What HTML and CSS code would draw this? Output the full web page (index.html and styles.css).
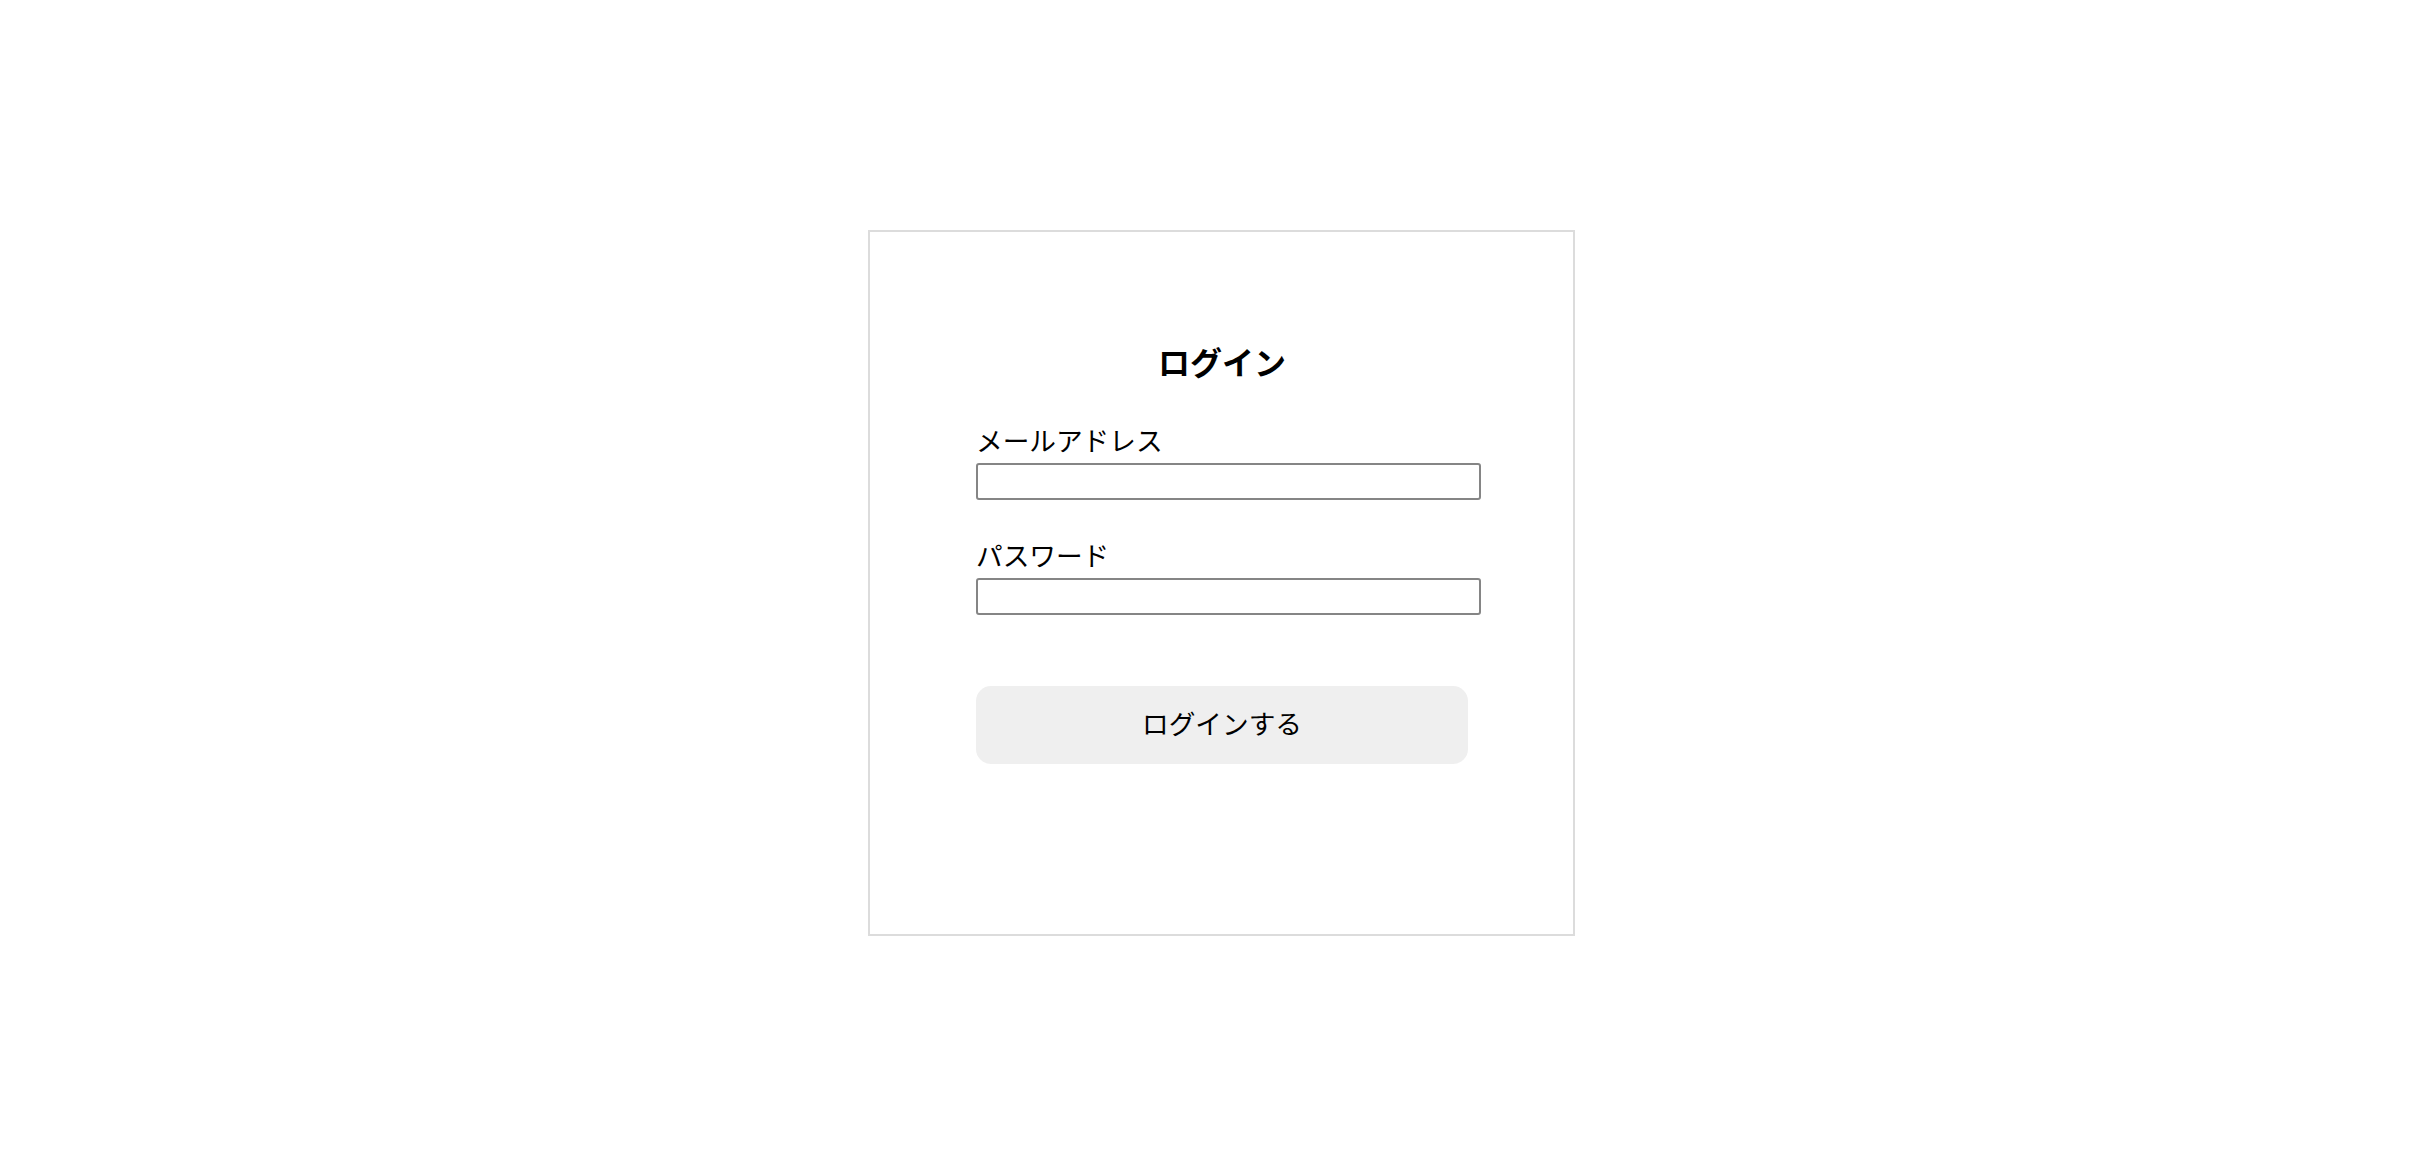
FILE: index.html
```html
<!DOCTYPE html>
<html lang="ja">
<head>
    <meta charset="UTF-8">
    <meta name="viewport" content="width=device-width, initial-scale=1.0">
    <title>ログイン</title>
    <link rel="stylesheet" href="styles.css">
</head>
<body>
    <div class="page">
        <!-- Login Form -->
        <div class="login-box">
            <h1>ログイン</h1>
            <form class="login-form">
                <div class="field">
                    <label for="email">メールアドレス</label>
                    <input type="email" id="email" name="email">
                </div>
                <div class="field">
                    <label for="password">パスワード</label>
                    <input type="password" id="password" name="password">
                </div>
                <button type="submit">ログインする</button>
            </form>
        </div>
    </div>
</body>
</html>
```

FILE: styles.css
```css
body {
    margin: 0;
    background-color: #fff;
    font-family: "Noto Sans CJK JP", "Noto Sans", sans-serif;
    color: #000;
}
.page {
    display: flex;
    justify-content: center;
    padding: 230px 0 0 7px;
}
.login-box {
    width: 492px;
    padding: 109px 105px 170px 106px;
    border: 2px solid #dcdcdc;
}
.login-box h1 {
    margin: 0;
    font-size: 32px;
    line-height: 40px;
    font-weight: bold;
    text-align: center;
}
.login-form {
    display: flex;
    flex-direction: column;
    margin-top: 41px;
}
.field {
    display: flex;
    flex-direction: column;
    margin-bottom: 37px;
}
.field label {
    font-size: 26.67px;
    line-height: 36px;
}
.field input {
    box-sizing: border-box;
    width: 505px;
    height: 37px;
    margin-top: 5px;
    border: 2px solid #858585;
    border-radius: 3px;
    padding: 2px 4px;
    font-size: 22px;
}
.login-form button {
    box-sizing: border-box;
    height: 78px;
    margin-top: 34px;
    padding: 0 0 5px;
    border: none;
    border-radius: 15px;
    background-color: #efefef;
    font-family: inherit;
    font-size: 26.67px;
    color: #000;
    cursor: pointer;
}
```
